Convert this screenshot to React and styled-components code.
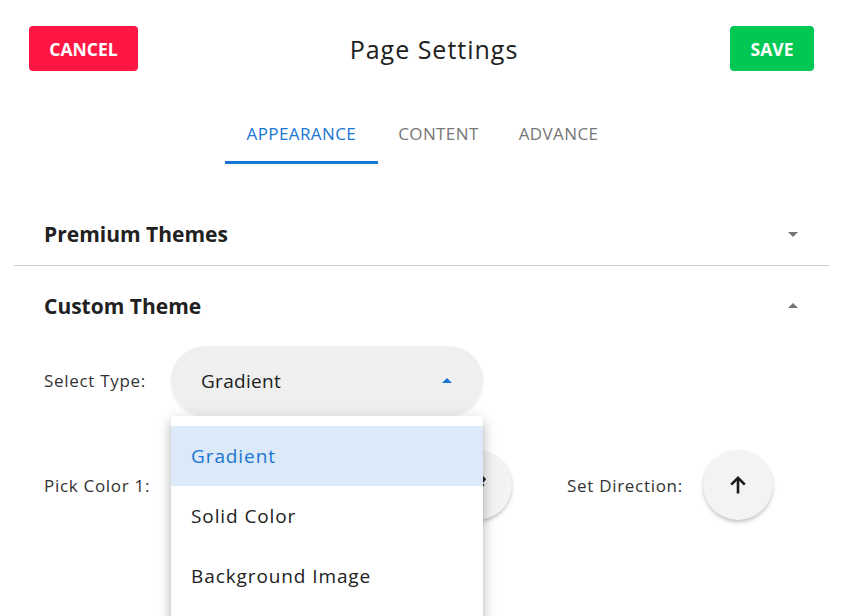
import React from "react";
import styled, { createGlobalStyle } from "styled-components";

const GlobalStyle = createGlobalStyle`
  body {
    margin: 0;
    font-family: "Open Sans", "Noto Sans", sans-serif;
    background: #fff;
    color: #212121;
  }
`;

const Page = styled.div`
  width: 843px;
  height: 616px;
  overflow: hidden;
  position: relative;
`;

const Header = styled.div`
  display: flex;
  align-items: center;
  justify-content: space-between;
  padding: 26px 29px 0 29px;
`;

const ActionButton = styled.button`
  height: 45px;
  width: ${(p) => p.w}px;
  padding: 0;
  border: none;
  border-radius: 4px;
  background: ${(p) => p.color};
  color: #fff;
  font-family: "Open Sans", sans-serif;
  font-weight: 700;
  font-size: 17.5px;
  letter-spacing: 0;
  cursor: pointer;
`;

const Title = styled.h1`
  margin: 0;
  font-size: 25px;
  font-weight: 400;
  color: #212121;
  letter-spacing: 1px;
`;

const TabBar = styled.div`
  display: flex;
  justify-content: center;
  margin-top: 34px;
`;

const Tab = styled.div`
  height: 56px;
  padding: 0 ${(p) => (p.active ? 22 : 20)}px;
  display: flex;
  align-items: center;
  font-size: 17px;
  text-transform: uppercase;
  color: ${(p) => (p.active ? "#1976d2" : "#777")};
  border-bottom: 3px solid ${(p) => (p.active ? "#1976d2" : "transparent")};
  letter-spacing: 0.4px;
`;

const Accordion = styled.div`
  margin: 39px 14px 0 14px;
`;

const Section = styled.div`
  border-bottom: ${(p) => (p.divider ? "1px solid #cfcfcf" : "none")};
`;

const Summary = styled.div`
  display: flex;
  align-items: center;
  justify-content: space-between;
  height: ${(p) => (p.expanded ? 64 : 62)}px;
  margin-top: ${(p) => (p.expanded ? 8 : 0)}px;
  padding: 0 24px 0 30px;
`;

const SectionTitle = styled.h2`
  margin: 0;
  font-size: 21px;
  font-weight: 700;
  color: #212121;
  letter-spacing: 0;
`;

const Caret = styled.svg`
  width: 24px;
  height: 24px;
  fill: ${(p) => p.color || "#757575"};
`;

const Details = styled.div`
  padding: 8px 30px 0 30px;
  display: flex;
  flex-direction: column;
  gap: 35px;
`;

const Row = styled.div`
  display: flex;
  align-items: center;
`;

const Label = styled.span`
  font-size: 17px;
  color: #333;
  letter-spacing: 0.7px;
  width: ${(p) => p.w}px;
  margin-left: ${(p) => p.ml || 0}px;
  flex-shrink: 0;
`;

const SelectWrap = styled.div`
  position: relative;
`;

const SelectPill = styled.div`
  width: 312px;
  height: 69px;
  box-sizing: border-box;
  border-radius: 35px;
  background: #efefef;
  box-shadow: 0 2px 3px rgba(0, 0, 0, 0.08);
  display: flex;
  align-items: center;
  justify-content: space-between;
  padding: 0 24px 0 30px;
  font-size: 19px;
  letter-spacing: 0.3px;
  color: #212121;
`;

const Menu = styled.ul`
  position: absolute;
  top: 70px;
  left: 0;
  width: 312px;
  margin: 0;
  padding: 10px 0 20px 0;
  list-style: none;
  background: #fff;
  border-radius: 4px;
  box-shadow: 0 5px 5px -3px rgba(0, 0, 0, 0.2), 0 8px 10px 1px rgba(0, 0, 0, 0.14),
    0 3px 14px 2px rgba(0, 0, 0, 0.12);
  z-index: 10;
`;

const MenuItem = styled.li`
  height: 60px;
  display: flex;
  align-items: center;
  padding: 0 20px;
  font-size: 19px;
  letter-spacing: 0.9px;
  color: ${(p) => (p.selected ? "#1976d2" : "#212121")};
  background: ${(p) => (p.selected ? "#dbe9f8" : "transparent")};
`;

const CircleButton = styled.button`
  width: 70px;
  height: 70px;
  border-radius: 50%;
  border: none;
  background: #f3f3f3;
  box-shadow: 0 3px 5px -1px rgba(0, 0, 0, 0.2), 0 1px 3px rgba(0, 0, 0, 0.1);
  display: flex;
  align-items: center;
  justify-content: center;
  flex-shrink: 0;
  margin-left: ${(p) => p.ml || 0}px;
  cursor: pointer;
  svg {
    width: 24px;
    height: 24px;
  }
`;

const DropDown = () => (
  <Caret viewBox="0 0 24 24">
    <path d="M7 10l5 5 5-5z" />
  </Caret>
);

const DropUp = ({ color }) => (
  <Caret viewBox="0 0 24 24" color={color}>
    <path d="M7 14l5-5 5 5z" />
  </Caret>
);

const types = ["Gradient", "Solid Color", "Background Image"];

export default function App() {
  return (
    <Page>
      <GlobalStyle />
      <Header>
        <ActionButton color="#ff1744" w={109}>CANCEL</ActionButton>
        <Title>Page Settings</Title>
        <ActionButton color="#00c853" w={84}>SAVE</ActionButton>
      </Header>

      <TabBar>
        <Tab active>Appearance</Tab>
        <Tab>Content</Tab>
        <Tab>Advance</Tab>
      </TabBar>

      <Accordion>
        <Section divider>
          <Summary>
            <SectionTitle>Premium Themes</SectionTitle>
            <DropDown />
          </Summary>
        </Section>
        <Section>
          <Summary expanded>
            <SectionTitle>Custom Theme</SectionTitle>
            <DropUp />
          </Summary>
          <Details>
            <Row>
              <Label w={127}>Select Type:</Label>
              <SelectWrap>
                <SelectPill>
                  <span>Gradient</span>
                  <DropUp color="#1976d2" />
                </SelectPill>
                <Menu>
                  {types.map((t, i) => (
                    <MenuItem key={t} selected={i === 0}>
                      {t}
                    </MenuItem>
                  ))}
                </Menu>
              </SelectWrap>
            </Row>
            <Row>
              <Label w={127}>Pick Color 1:</Label>
              <CircleButton ml={271}>
                <svg viewBox="0 0 24 24" fill="#212121">
                  <path d="M20.71 5.63l-2.34-2.34a.996.996 0 00-1.41 0l-3.12 3.12-1.93-1.91-1.41 1.41 1.42 1.42L3 16.25V21h4.75l8.92-8.92 1.42 1.42 1.41-1.41-1.92-1.92 3.12-3.12c.4-.4.4-1.03.01-1.42z" />
                </svg>
              </CircleButton>
              <Label w={136} ml={55}>Set Direction:</Label>
              <CircleButton>
                <svg viewBox="0 0 24 24" fill="none" stroke="#1a1a1a" strokeWidth="2.6">
                  <path d="M12 20.5V5" />
                  <path d="M5.2 11.6L12 4.8l6.8 6.8" />
                </svg>
              </CircleButton>
            </Row>
          </Details>
        </Section>
      </Accordion>
    </Page>
  );
}
